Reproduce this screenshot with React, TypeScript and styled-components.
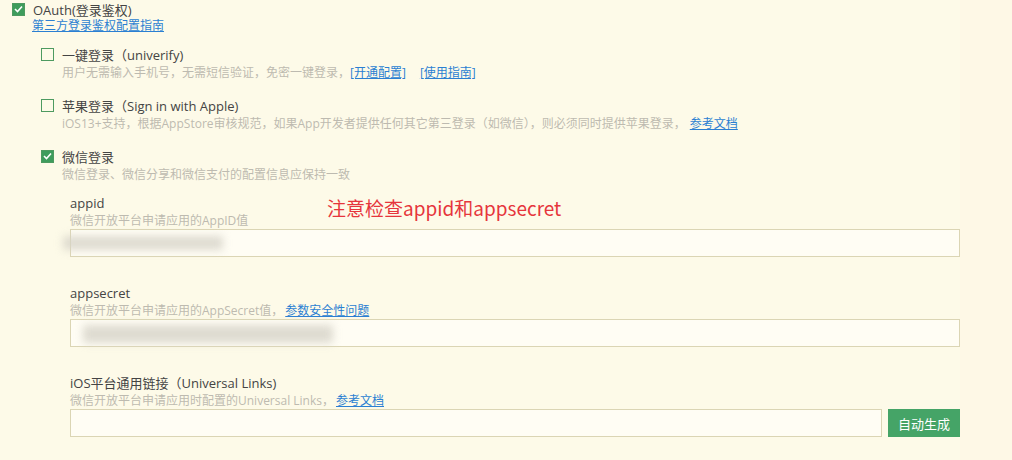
import styled, { createGlobalStyle } from "styled-components";

const GlobalStyle = createGlobalStyle`
  body {
    margin: 0;
    background: #fef8e6;
    font-family: "Open Sans", "Noto Sans CJK SC", sans-serif;
  }
`;

const Page = styled.div`
  position: relative;
  width: 960px;
  height: 460px;
  background: #fdfae8;
  padding: 0 0 0 12px;
  box-sizing: border-box;
  color: #444;
`;

const Row = styled.div<{ $h?: number }>`
  display: flex;
  align-items: center;
  height: ${({ $h }) => $h ?? 20}px;
  gap: 8px;
  font-size: 13px;
`;

const Box = styled.span<{ $checked?: boolean }>`
  width: 13px;
  height: 13px;
  box-sizing: border-box;
  border: 1px solid #4d9a60;
  background: ${({ $checked }) => ($checked ? "#3e9c5c" : "transparent")};
  display: flex;
  align-items: center;
  justify-content: center;
  flex-shrink: 0;
`;

const Link = styled.a<{ $gap?: number }>`
  color: #2b7fd2;
  text-decoration: underline;
  cursor: pointer;
  margin-left: ${({ $gap }) => $gap ?? 0}px;
`;

const GuideLink = styled(Link)`
  display: block;
  margin-left: 20px;
  font-size: 12px;
  line-height: 16px;
`;

const Items = styled.div`
  display: flex;
  flex-direction: column;
  gap: 13px;
  margin: 10px 0 0 29px;
`;

const Desc = styled.div`
  font-size: 12px;
  line-height: 18px;
  color: #bdbab0;
  margin-left: 21px;
  white-space: nowrap;
`;

const Fields = styled.div`
  display: flex;
  flex-direction: column;
  gap: 27px;
  margin: 10px 0 0 58px;
  width: 890px;
`;

const Field = styled.div`
  display: flex;
  flex-direction: column;
`;

const Label = styled.div`
  font-size: 13px;
  line-height: 18px;
  color: #444;
`;

const Hint = styled.div`
  font-size: 12px;
  line-height: 17px;
  color: #bdbab0;
  white-space: nowrap;
`;

const InputRow = styled.div`
  display: flex;
  gap: 6px;
`;

const Input = styled.div`
  position: relative;
  flex: 1;
  height: 28px;
  box-sizing: border-box;
  border: 1px solid #dbd5b4;
  background: #fffdf4;
`;

const Blur = styled.div<{ $l: number; $w: number; $t: number; $h: number }>`
  position: absolute;
  left: ${({ $l }) => $l}px;
  top: ${({ $t }) => $t}px;
  width: ${({ $w }) => $w}px;
  height: ${({ $h }) => $h}px;
  background: #d6d3c8;
  filter: blur(4px);
  opacity: 0.8;
`;

const Button = styled.button`
  width: 72px;
  height: 28px;
  border: none;
  background: #45a467;
  color: #fff;
  font-family: "Noto Sans CJK SC", sans-serif;
  font-size: 13px;
  padding: 0;
`;

const Note = styled.div`
  position: absolute;
  left: 327px;
  top: 196px;
  font-size: 19px;
  color: #e6353c;
  font-family: "Noto Sans CJK SC", sans-serif;
  line-height: 24px;
`;

const Check = () => (
  <svg width="9" height="8" viewBox="0 0 9 8">
    <path d="M1 4 L3.5 6.5 L8 1.5" stroke="#fff" strokeWidth="1.6" fill="none" />
  </svg>
);

export default function App() {
  return (
    <>
      <GlobalStyle />
      <Page>
        <Row $h={18}>
          <Box $checked>
            <Check />
          </Box>
          OAuth(登录鉴权)
        </Row>
        <GuideLink>第三方登录鉴权配置指南</GuideLink>
        <Items>
          <div>
            <Row>
              <Box />
              一键登录（univerify)
            </Row>
            <Desc>
              用户无需输入手机号，无需短信验证，免密一键登录，<Link>[开通配置]</Link>
              <Link $gap={14}>[使用指南]</Link>
            </Desc>
          </div>
          <div>
            <Row>
              <Box />
              苹果登录（Sign in with Apple)
            </Row>
            <Desc>
              iOS13+支持，根据AppStore审核规范，如果App开发者提供任何其它第三登录（如微信），则必须同时提供苹果登录，
              <Link $gap={4}>参考文档</Link>
            </Desc>
          </div>
          <div>
            <Row>
              <Box $checked>
                <Check />
              </Box>
              微信登录
            </Row>
            <Desc>微信登录、微信分享和微信支付的配置信息应保持一致</Desc>
          </div>
        </Items>
        <Fields>
          <Field>
            <Label>appid</Label>
            <Hint>微信开放平台申请应用的AppID值</Hint>
            <InputRow>
              <Input>
                <Blur $l={-8} $w={160} $t={6} $h={14} />
              </Input>
            </InputRow>
          </Field>
          <Field>
            <Label>appsecret</Label>
            <Hint>
              微信开放平台申请应用的AppSecret值，<Link $gap={2}>参数安全性问题</Link>
            </Hint>
            <InputRow>
              <Input>
                <Blur $l={12} $w={250} $t={5} $h={18} />
              </Input>
            </InputRow>
          </Field>
          <Field>
            <Label>iOS平台通用链接（Universal Links)</Label>
            <Hint>
              微信开放平台申请应用时配置的Universal Links，<Link $gap={2}>参考文档</Link>
            </Hint>
            <InputRow>
              <Input />
              <Button>自动生成</Button>
            </InputRow>
          </Field>
        </Fields>
        <Note>注意检查appid和appsecret</Note>
      </Page>
    </>
  );
}
